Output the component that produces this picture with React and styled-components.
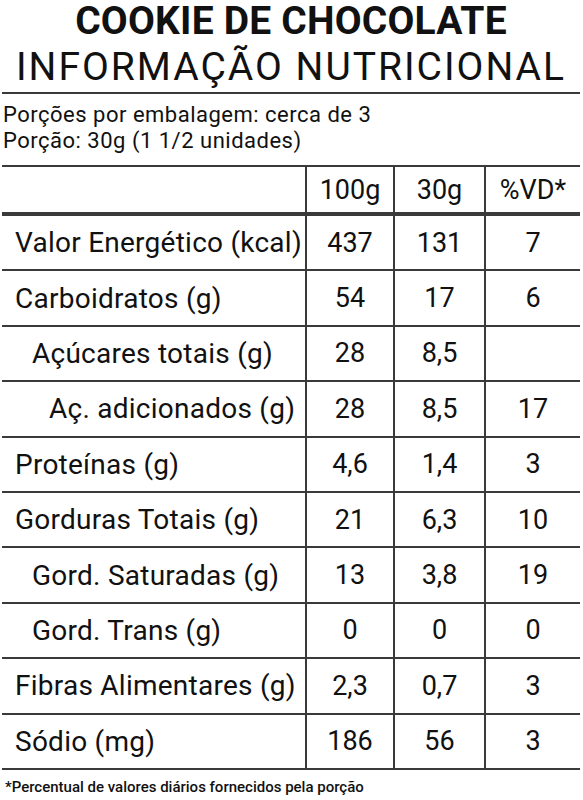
import React from "react";
import styled, { createGlobalStyle } from "styled-components";

const rows = [
  { label: "Valor Energético (kcal)", level: 0, a: "437", b: "131", vd: "7" },
  { label: "Carboidratos (g)", level: 0, a: "54", b: "17", vd: "6" },
  { label: "Açúcares totais (g)", level: 1, a: "28", b: "8,5", vd: "" },
  { label: "Aç. adicionados (g)", level: 2, a: "28", b: "8,5", vd: "17" },
  { label: "Proteínas (g)", level: 0, a: "4,6", b: "1,4", vd: "3" },
  { label: "Gorduras Totais (g)", level: 0, a: "21", b: "6,3", vd: "10" },
  { label: "Gord. Saturadas (g)", level: 1, a: "13", b: "3,8", vd: "19" },
  { label: "Gord. Trans (g)", level: 1, a: "0", b: "0", vd: "0" },
  { label: "Fibras Alimentares (g)", level: 0, a: "2,3", b: "0,7", vd: "3" },
  { label: "Sódio (mg)", level: 0, a: "186", b: "56", vd: "3" },
];

const indent = [13, 30, 47];

function App() {
  return (
    <>
      <GlobalStyle />
      <Label>
        <Header>
          <TitleBold>COOKIE DE CHOCOLATE</TitleBold>
          <Title>INFORMAÇÃO NUTRICIONAL</Title>
        </Header>
        <Serving>
          <div>Porções por embalagem: cerca de 3</div>
          <div>Porção: 30g (1 1/2 unidades)</div>
        </Serving>
        <Table>
          <HeadRow>
            <Cell />
            <Value>100g</Value>
            <Value>30g</Value>
            <Value>%VD*</Value>
          </HeadRow>
          {rows.map((r) => (
            <Row key={r.label}>
              <Cell $level={r.level}>{r.label}</Cell>
              <Value>{r.a}</Value>
              <Value>{r.b}</Value>
              <Value>{r.vd}</Value>
            </Row>
          ))}
        </Table>
        <Footnote>*Percentual de valores diários fornecidos pela porção</Footnote>
      </Label>
    </>
  );
}
export default App;

const GlobalStyle = createGlobalStyle`
  body {
    margin: 0;
    background: #ffffff;
    color: #111111;
    font-family: Roboto, "Noto Sans", sans-serif;
  }
`;

const Label = styled.div`
  width: 578px;
  margin: 0 2px;
`;

const Header = styled.header`
  display: flex;
  flex-direction: column;
  align-items: center;
  padding: 2px 0 3px;
  border-bottom: 2px solid #3a3a3a;
`;

const TitleBold = styled.h1`
  margin: 0;
  font-size: 39px;
  line-height: 38px;
  font-weight: 700;
  letter-spacing: 0.2px;
`;

const Title = styled.h2`
  margin: 5px 0 0;
  font-size: 39px;
  line-height: 44px;
  font-weight: 400;
  letter-spacing: 2px;
`;

const Serving = styled.div`
  padding: 8px 0 11px 1px;
  font-size: 22px;
  line-height: 26px;
  letter-spacing: 0.5px;
`;

const Table = styled.div`
  border-top: 2px solid #3a3a3a;
  border-bottom: 2px solid #3a3a3a;
`;

const Row = styled.div`
  display: grid;
  grid-template-columns: 303px 88px 91px 96px;
  height: 55.4px;
  box-sizing: border-box;
  font-size: 28px;
  letter-spacing: 0.25px;

  & + & {
    border-top: 2px solid #3a3a3a;
  }
`;

const HeadRow = styled(Row)`
  height: 47px;
  border-bottom: 2px solid #3a3a3a;
`;

const Cell = styled.div`
  display: flex;
  align-items: center;
  padding-left: ${(p) => indent[p.$level || 0]}px;
  white-space: nowrap;
`;

const Value = styled.div`
  display: flex;
  align-items: center;
  justify-content: center;
  border-left: 2px solid #3a3a3a;
  font-size: 27px;
  letter-spacing: 0;
`;

const Footnote = styled.p`
  margin: 8px 0 0 3px;
  font-size: 15px;
  line-height: 18px;
  font-weight: 500;
`;
